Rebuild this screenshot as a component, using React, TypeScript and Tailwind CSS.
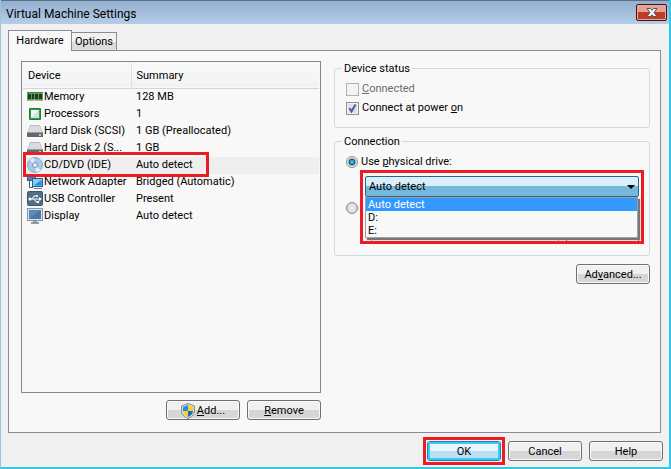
import type { ReactNode } from "react";

type Device = {
  name: string;
  summary: string;
  icon: ReactNode;
  selected?: boolean;
};

function MemoryIcon() {
  return (
    <svg width="16" height="16" viewBox="0 0 16 16" shapeRendering="crispEdges">
      <rect x="0" y="3" width="16" height="9" fill="#4fa653" />
      <rect x="0" y="3" width="16" height="1" fill="#2f8a3a" />
      <rect x="1" y="5" width="3" height="5" fill="#2a332a" />
      <rect x="5" y="5" width="2" height="5" fill="#2a332a" />
      <rect x="8" y="5" width="3" height="5" fill="#2a332a" />
      <rect x="12" y="5" width="3" height="5" fill="#2a332a" />
      <rect x="0" y="11" width="16" height="1" fill="#b9b06a" />
      <rect x="7" y="11" width="1" height="1" fill="#f8f8f8" />
    </svg>
  );
}

function ProcessorIcon() {
  return (
    <svg width="16" height="16" viewBox="0 0 16 16">
      <rect x="2" y="2" width="12" height="12" rx="1" fill="#2f9a4c" />
      <rect x="2.5" y="2.5" width="11" height="11" rx="1" fill="none" stroke="#1d7a38" />
      <rect x="4" y="4" width="8" height="8" fill="#f0f5f1" />
      <path d="M4 12l8-8v8z" fill="#d5ddd7" />
    </svg>
  );
}

function DiskIcon() {
  return (
    <svg width="16" height="16" viewBox="0 0 16 16">
      <path d="M3 2h10l3 8H0z" fill="#b9bdc3" />
      <path d="M3.5 3h9l2.5 6H1z" fill="#d9dbdf" />
      <path d="M0 10h16v4H0z" fill="#646971" />
      <path d="M0 9h16v1H0z" fill="#989ca2" />
      <rect x="12" y="11" width="2" height="2" fill="#b7e08a" />
    </svg>
  );
}

function DiscIcon() {
  return (
    <svg width="16" height="16" viewBox="0 0 16 16">
      <circle cx="8" cy="8" r="7.5" fill="#a9c9e6" stroke="#86aacb" />
      <path d="M8 8L2.5 3A7 7 0 0 1 7 1zM8 8l5.500 5a7 7 0 0 1-4.500 2z" fill="#e1f0fb" />
      <circle cx="8" cy="8" r="2.5" fill="#d5e5f3" stroke="#7397bd" />
      <circle cx="8" cy="8" r="1" fill="#fff" />
    </svg>
  );
}

function NetworkIcon() {
  return (
    <svg width="16" height="16" viewBox="0 0 16 16">
      <rect x="0.5" y="0.5" width="8" height="6" fill="#3f86c0" stroke="#345b80" />
      <path d="M2.5 7v6.500H6" fill="none" stroke="#345b80" />
      <rect x="5.5" y="4.5" width="10" height="8" fill="#7fcdf7" stroke="#345b80" />
      <path d="M7 11.500L14.500 6v5.500z" fill="#1a8ee0" />
      <path d="M7 14.5h8" stroke="#6b7f93" />
    </svg>
  );
}

function UsbIcon() {
  return (
    <svg width="16" height="16" viewBox="0 0 16 16">
      <rect x="0.5" y="0.5" width="15" height="14" rx="1" fill="#536e84" stroke="#3f586c" />
      <path d="M2 8h10M5 8l2-3h3M7 8l2 3h2" fill="none" stroke="#fff" />
      <path d="M12 6l3 2-3 2z" fill="#fff" />
      <circle cx="3" cy="8" r="1.5" fill="#fff" />
      <circle cx="10" cy="5" r="1" fill="#fff" />
      <rect x="10" y="10" width="2" height="2" fill="#fff" />
    </svg>
  );
}

function DisplayIcon() {
  return (
    <svg width="16" height="16" viewBox="0 0 16 16">
      <rect x="0.5" y="0.5" width="15" height="12" fill="#dbe5ee" stroke="#8497aa" />
      <rect x="2" y="2" width="12" height="9" fill="#4878a8" />
      <path d="M2 11V2h12z" fill="#6088b4" />
      <path d="M6 13h4v1h2v2H4v-2h2z" fill="#8e9ba8" />
    </svg>
  );
}

function ShieldIcon() {
  return (
    <svg width="14" height="16" viewBox="0 0 14 16">
      <path d="M7 0.5L13.500 3v5c0 4-3.500 6.500-6.500 7.500C4 14.500 0.500 12 0.500 8V3z" fill="#d5dbe0" stroke="#7f8b95" />
      <path d="M7 2v6H2V4z" fill="#2b8ade" />
      <path d="M7 2l5 2v4H7z" fill="#f8d12c" />
      <path d="M2 8h5v6C4.500 13 2 11 2 8z" fill="#f8d12c" />
      <path d="M7 8h5c0 3-2.500 5-5 6z" fill="#1d69bd" />
    </svg>
  );
}

const devices: Device[] = [
  { name: "Memory", summary: "128 MB", icon: <MemoryIcon /> },
  { name: "Processors", summary: "1", icon: <ProcessorIcon /> },
  { name: "Hard Disk (SCSI)", summary: "1 GB (Preallocated)", icon: <DiskIcon /> },
  { name: "Hard Disk 2 (S...", summary: "1 GB", icon: <DiskIcon /> },
  { name: "CD/DVD (IDE)", summary: "Auto detect", icon: <DiscIcon />, selected: true },
  { name: "Network Adapter", summary: "Bridged (Automatic)", icon: <NetworkIcon /> },
  { name: "USB Controller", summary: "Present", icon: <UsbIcon /> },
  { name: "Display", summary: "Auto detect", icon: <DisplayIcon /> },
];

function PushButton({ children, primary }: { children: ReactNode; primary?: boolean }) {
  return (
    <button
      type="button"
      className={`flex h-5 w-[74px] items-center justify-center rounded-[3px] border pt-0.5 whitespace-nowrap ${
        primary
          ? "border-[#2a7fa8] bg-linear-to-b from-[#e9f4fb] from-50% to-[#bcdff4] to-50% shadow-[inset_0_0_0_2px_#35cbf5]"
          : "border-[#707070] bg-linear-to-b from-[#f0f0f0] from-50% to-[#d6d6d6] to-50% shadow-[inset_0_0_0_1px_#f8f8f8]"
      }`}
    >
      {children}
    </button>
  );
}

function TitleBar() {
  return (
    <header className="flex h-6 items-start justify-between border-t border-[#5c7186] bg-linear-to-b from-[#93b0cf] to-[#b5cde8] pr-0.5 pl-[5px]">
      <h1 className="pt-[5px] text-[12px] leading-4">Virtual Machine Settings</h1>
      <button
        type="button"
        aria-label="Close"
        className="mt-[3px] flex h-[17px] w-[31px] items-center justify-center rounded-[2px] border border-[#47101a] bg-linear-to-b from-[#e4a294] from-50% to-[#c03c22] to-50% shadow-[inset_0_0_0_1px_#e5aa9d]"
      >
        <svg width="12" height="9" viewBox="0 0 12 9">
          <path d="M1 0.5h3.500L6 2.300 7.500 0.500H11L8 4.500l3 4H7.500L6 6.700 4.500 8.500H1l3-4z" fill="#f8f8f8" stroke="#535666" />
        </svg>
      </button>
    </header>
  );
}

function DeviceList() {
  return (
    <div className="relative mt-px flex-1 border border-[#828790] bg-[#f8f8f8] p-px">
      <table className="w-full table-fixed border-collapse text-left">
        <thead>
          <tr className="h-[25px] border-b border-[#d5d5d5] bg-linear-to-b from-[#f9f9f9] to-[#f1f2f4]">
            <th className="w-[108px] border-r border-[#dfe0e3] pt-px pl-[5px] font-normal">Device</th>
            <th className="pt-px pl-[5px] font-normal">Summary</th>
          </tr>
        </thead>
        <tbody>
          {devices.map((device) => (
            <tr key={device.name} className={`h-[17px] ${device.selected ? "bg-[#efefef]" : ""}`}>
              <td className="p-0">
                <div className="flex h-[17px] items-center pl-1 whitespace-nowrap">
                  <span className="mr-px shrink-0">{device.icon}</span>
                  {device.name}
                </div>
              </td>
              <td className="p-0 pl-[5px] whitespace-nowrap">{device.summary}</td>
            </tr>
          ))}
        </tbody>
      </table>
      {/* Callout around the CD/DVD row */}
      <div className="pointer-events-none absolute top-[90px] left-px h-[25px] w-[186px] border-3 border-[#ed1c24]" />
    </div>
  );
}

function DeviceStatus() {
  return (
    <fieldset className="h-[68px] min-w-0 rounded-[3px] border border-[#cfdae3] px-[11px]">
      <legend className="-ml-1 px-0.5 pt-px leading-4">Device status</legend>
      <label className="mt-[3px] flex h-[18px] items-center gap-[3px] text-[#6d6d6d]">
        <input type="checkbox" disabled className="size-[13px] appearance-none border border-[#b1b1b1] bg-[#f3f3f3]" />
        <span>
          <u>C</u>onnected
        </span>
      </label>
      <label className="mt-px flex h-[18px] items-center gap-[3px]">
        <span className="relative flex">
          <input
            type="checkbox"
            defaultChecked
            className="peer size-[13px] appearance-none border border-[#8e8f8f] bg-[#dde2e8] shadow-[inset_0_0_0_1px_#f4f4f4]"
          />
          <svg width="13" height="13" viewBox="0 0 13 13" className="pointer-events-none absolute hidden peer-checked:block">
            <path d="M3.5 6l2 3.500L9.500 2.500" fill="none" stroke="#4b5f97" strokeWidth="2" />
          </svg>
        </span>
        <span>
          Connect at power <u>o</u>n
        </span>
      </label>
    </fieldset>
  );
}

function DriveSelect() {
  return (
    <div className="absolute top-5 right-[5px] left-[25px] h-[74px] border-3 border-[#ed1c24] bg-[#f8f8f8] px-0.5 pt-[3px]">
      <div className="relative">
        <select
          aria-label="Physical drive"
          className="block h-[21px] w-full appearance-none rounded-[2px] border border-[#2c628b] bg-linear-to-b from-[#d9eff9] from-50% to-[#74b8da] to-50% px-[3px]"
        >
          <option>Auto detect</option>
          <option>D:</option>
          <option>E:</option>
        </select>
        <svg width="8" height="4" viewBox="0 0 8 4" className="pointer-events-none absolute top-[9px] right-1">
          <path d="M0 0h8L4 4z" fill="#000" />
        </svg>
      </div>
      <ul className="relative mr-px border border-[#a0a0a0] bg-[#f8f8f8] shadow-[2px_2px_1px_#777777]">
        <li className="h-[13px] bg-[#3399ff] px-0.5 leading-[13px] text-white">Auto detect</li>
        <li className="h-[13px] px-0.5 leading-[13px]">D:</li>
        <li className="h-[13px] px-0.5 leading-[13px]">E:</li>
      </ul>
      {/* Image path row, mostly hidden behind the open list */}
      <div className="flex h-[3px] gap-[7px] pl-1.5">
        <input aria-label="Image file" className="min-w-0 flex-1 border-x border-[#a0a0a0]" />
        <button type="button" aria-label="Browse" className="w-[73px] border-x border-[#707070]" />
      </div>
    </div>
  );
}

function Connection() {
  return (
    <fieldset className="relative mt-[5px] h-[123px] min-w-0 rounded-[3px] border border-[#cfdae3] px-[11px]">
      <legend className="-ml-1 px-0.5 pt-px leading-4">Connection</legend>
      <label className="mt-1 flex h-4 items-center gap-[3px]">
        <input
          type="radio"
          name="connection"
          defaultChecked
          className="size-3 appearance-none rounded-full border border-[#8e8f8f] bg-[radial-gradient(circle,#4cc0ea_0_1px,#12517d_3px,#e4e7ea_4px)]"
        />
        <span>
          Use <u>p</u>hysical drive:
        </span>
      </label>
      <input
        type="radio"
        name="connection"
        aria-label="Use ISO image file"
        className="mt-8 block size-3 appearance-none rounded-full border border-[#8e8f8f] bg-[radial-gradient(circle,#e8e8e8_0_3px,#cccccc_5px)]"
      />
      <DriveSelect />
    </fieldset>
  );
}

export default function App() {
  return (
    <div className="flex min-h-screen flex-col border-r-2 border-b-2 border-l border-r-[#35c8e6] border-b-[#35c8e6] border-l-[#9fc3df] bg-[#f0f0f0] font-[Roboto,sans-serif] text-[11px] leading-4 text-black">
      <TitleBar />
      <main className="flex flex-1 flex-col pt-1.5 pr-2 pb-1.5 pl-[7px]">
        <div role="tablist" className="flex items-end">
          <button type="button" role="tab" aria-selected="true" className="z-10 -mb-px h-[21px] w-16 border border-b-0 border-[#898c95] bg-[#f8f8f8]">
            Hardware
          </button>
          <button type="button" role="tab" className="-ml-px h-[18px] w-[46px] border border-b-0 border-[#898c95] bg-linear-to-b from-[#f2f2f2] from-50% to-[#dcdcdc] to-50% pt-px">
            Options
          </button>
        </div>
        <section className="flex flex-1 items-stretch gap-[13px] border border-[#898c95] bg-[#f8f8f8] pt-[9px] pr-2.5 pb-3 pl-3">
          <div className="flex w-[300px] shrink-0 flex-col">
            <DeviceList />
            <div className="mt-[7px] flex justify-end gap-[7px]">
              <PushButton>
                <ShieldIcon />
                <span className="ml-0.5">
                  <u>A</u>dd...
                </span>
              </PushButton>
              <PushButton>
                <span>
                  <u>R</u>emove
                </span>
              </PushButton>
            </div>
          </div>
          <div className="min-w-0 flex-1">
            <DeviceStatus />
            <Connection />
            <div className="mt-2 flex justify-end">
              <PushButton>
                <span>
                  Ad<u>v</u>anced...
                </span>
              </PushButton>
            </div>
          </div>
        </section>
        <footer className="-mr-0.5 mt-2 flex items-center justify-end gap-[7px]">
          <div className="relative">
            <PushButton primary>OK</PushButton>
            {/* Callout around OK */}
            <div className="pointer-events-none absolute -inset-1 border-3 border-[#ed1c24]" />
          </div>
          <PushButton>Cancel</PushButton>
          <PushButton>Help</PushButton>
        </footer>
      </main>
    </div>
  );
}
